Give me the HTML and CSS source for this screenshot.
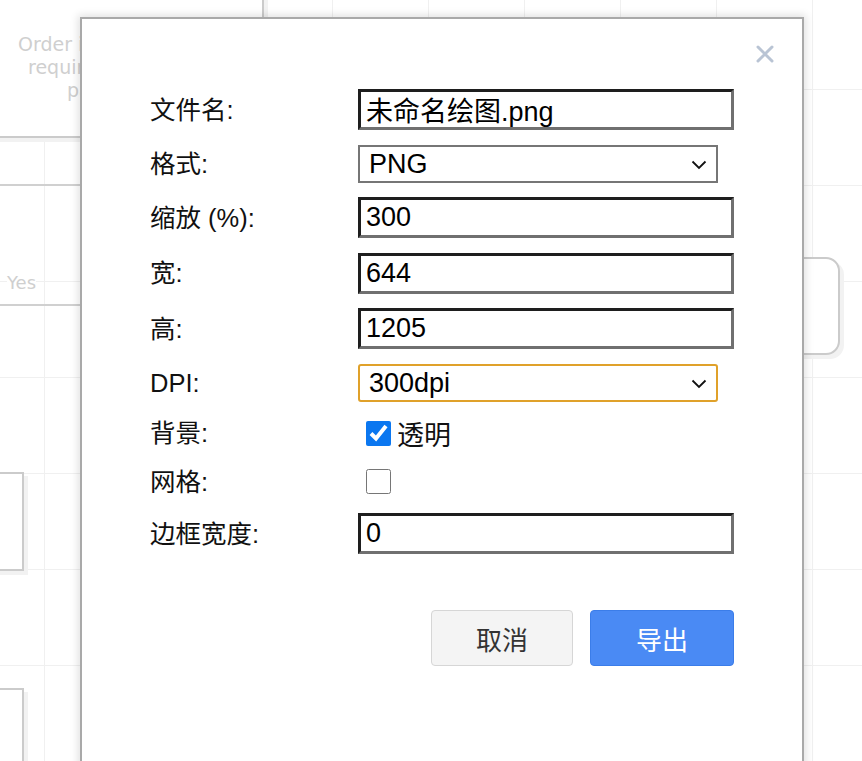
FILE: index.html
```html
<!DOCTYPE html>
<html lang="zh">
<head>
<meta charset="utf-8">
<title>导出</title>
<link rel="stylesheet" href="styles.css">
</head>
<body>
<div class="canvas">
  <div class="shape s1"></div>
  <div class="s1-text">
    <div class="t1">Order information</div>
    <div class="t2">requires checking</div>
    <div class="t3">payment</div>
  </div>
  <div class="edge e1"></div>
  <div class="edge e2"></div>
  <div class="edge-label">Yes</div>
  <div class="shape s3"></div>
  <div class="shape s4"></div>
  <div class="shape s5"></div>
</div>

<div class="dialog">
  <button class="close" type="button" aria-label="关闭">
    <svg width="18" height="18" viewBox="0 0 18 18"><path d="M2 2L16 16M16 2L2 16" stroke="#b9c4d4" stroke-width="3" stroke-linecap="round"/></svg>
  </button>
  <div class="form">
    <label class="lbl">文件名:</label>
    <input class="txt" type="text" value="未命名绘图.png">

    <label class="lbl">格式:</label>
    <div class="sel-wrap">
      <select class="sel"><option>PNG</option></select>
      <svg class="chev" width="16" height="10" viewBox="0 0 16 10"><path d="M1.5 1.5L8 8L14.5 1.5" fill="none" stroke="#111" stroke-width="1.8"/></svg>
    </div>

    <label class="lbl">缩放 (%):</label>
    <input class="txt" type="text" value="300">

    <label class="lbl">宽:</label>
    <input class="txt" type="text" value="644">

    <label class="lbl">高:</label>
    <input class="txt" type="text" value="1205">

    <label class="lbl">DPI:</label>
    <div class="sel-wrap">
      <select class="sel sel-focus"><option>300dpi</option></select>
      <svg class="chev" width="16" height="10" viewBox="0 0 16 10"><path d="M1.5 1.5L8 8L14.5 1.5" fill="none" stroke="#111" stroke-width="1.8"/></svg>
    </div>

    <label class="lbl">背景:</label>
    <div class="cb-row"><input class="cb" type="checkbox" checked><span class="cb-text">透明</span></div>

    <label class="lbl">网格:</label>
    <div class="cb-row"><input class="cb" type="checkbox"></div>

    <label class="lbl">边框宽度:</label>
    <input class="txt" type="text" value="0">
  </div>
  <div class="actions">
    <button class="btn cancel" type="button">取消</button>
    <button class="btn primary" type="button">导出</button>
  </div>
</div>
</body>
</html>
```

FILE: styles.css
```css
html, body {
  margin: 0;
  padding: 0;
}
body {
  width: 862px;
  height: 761px;
  overflow: hidden;
  position: relative;
  background: #fff;
  font-family: "Liberation Sans", "Noto Sans CJK SC", sans-serif;
}

/* background diagram canvas */
.canvas {
  position: absolute;
  inset: 0;
  background-color: #fff;
  background-image:
    linear-gradient(to right, #f0f0f0 1px, transparent 1px),
    linear-gradient(to bottom, #f0f0f0 1px, transparent 1px);
  background-size: 96px 96px;
  background-position: 44px 89px;
}
.shape {
  position: absolute;
  border: 2px solid #cbcbcb;
  background: #fff;
  box-shadow: 4px 4px 0 #f2f2f2;
}
.s1 { left: -10px; top: -20px; width: 270px; height: 154px; }
.s3 { left: -10px; top: 472px; width: 30px; height: 95px; }
.s4 { left: -10px; top: 688px; width: 30px; height: 100px; }
.s5 { left: 770px; top: 257px; width: 66px; height: 94px; border-radius: 14px; }
.s1-text {
  position: absolute;
  left: 0;
  top: 33px;
  font-family: "DejaVu Sans", sans-serif;
  font-size: 19px;
  line-height: 23px;
  color: #cfcfcf;
  white-space: nowrap;
}
.t1 { margin-left: 18px; }
.t2 { margin-left: 28px; }
.t3 { margin-left: 67px; }
.edge {
  position: absolute;
  left: 0;
  width: 82px;
  height: 2px;
  background: #d0d0d0;
}
.e1 { top: 184px; }
.e2 { top: 304px; }
.edge-label {
  position: absolute;
  left: 7px;
  top: 272px;
  font-family: "DejaVu Sans", sans-serif;
  font-size: 18px;
  line-height: 22px;
  color: #cfcfcf;
  background: #fff;
}

/* dialog */
.dialog {
  position: absolute;
  left: 80px;
  top: 17px;
  width: 724px;
  height: 800px;
  box-sizing: border-box;
  border: 2px solid #a9a9a9;
  background: #fff;
  box-shadow: 0 0 8px 2px rgba(0, 0, 0, 0.12);
  padding: 70px 0 0 68px;
}
.close {
  position: absolute;
  left: 674px;
  top: 26px;
  width: 18px;
  height: 18px;
  padding: 0;
  border: 0;
  background: none;
  display: flex;
}
.form {
  display: grid;
  grid-template-columns: 208px 376px;
  row-gap: 14.5px;
  align-items: center;
}
.lbl {
  font-size: 25.5px;
  color: #111;
  line-height: 30px;
}
.txt {
  box-sizing: border-box;
  width: 376px;
  height: 41px;
  margin: 0;
  padding: 0 5px;
  border-style: solid;
  border-width: 3px;
  border-color: #1e1e1e #707070 #707070 #1e1e1e;
  font-family: "Liberation Sans", "Noto Sans CJK SC", sans-serif;
  font-size: 27px;
  color: #000;
  background: #fff;
  outline: none;
}
.sel-wrap {
  position: relative;
  width: 360px;
  height: 38px;
}
.sel {
  appearance: none;
  -webkit-appearance: none;
  box-sizing: border-box;
  width: 360px;
  height: 38px;
  margin: 0;
  padding: 0 0 0 9px;
  border: 2px solid #767676;
  border-radius: 0;
  background: #fff;
  font-family: "Liberation Sans", "Noto Sans CJK SC", sans-serif;
  font-size: 27px;
  color: #000;
}
.sel-focus {
  border-color: #e0a12a;
  border-radius: 3px;
}
.chev {
  position: absolute;
  right: 11px;
  top: 15px;
  pointer-events: none;
}
.cb-row {
  display: flex;
  align-items: center;
  height: 34px;
  gap: 6px;
}
.cb {
  width: 25px;
  height: 25px;
  margin: 0 0 0 8px;
  accent-color: #0b77f0;
}
.cb-text {
  font-size: 27px;
  color: #111;
}
.actions {
  display: flex;
  justify-content: flex-end;
  gap: 17px;
  width: 584px;
  margin-top: 56px;
}
.btn {
  height: 56px;
  border-radius: 4px;
  font-family: "Noto Sans CJK SC", sans-serif;
  font-size: 26px;
  padding: 0;
}
.cancel {
  width: 142px;
  background: #f4f4f4;
  border: 1px solid #d6d6d6;
  color: #333;
}
.primary {
  width: 144px;
  background: #4a8af4;
  border: 1px solid #3b7de9;
  color: #fff;
}
```
